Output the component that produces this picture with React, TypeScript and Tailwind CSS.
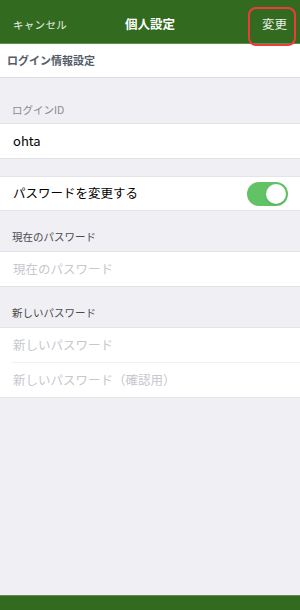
import React from "react";

export default function App() {
  const font = { fontFamily: '"Noto Sans CJK JP", "Noto Sans", sans-serif' };
  return (
    <div className="relative w-[300px] h-[610px] bg-[#efeff4] flex flex-col overflow-hidden" style={font}>
      <header className="relative h-[44px] bg-[#326a1f] border-b border-[#5f8c50] flex items-center justify-between pl-[13px] pr-[13px] pt-[6px]">
        <span className="text-[10.5px] text-white/90 tracking-[0.3px]">キャンセル</span>
        <span className="absolute left-1/2 top-[6px] bottom-0 flex items-center -translate-x-1/2 text-[12.5px] font-bold text-white">個人設定</span>
        <span className="text-[12.5px] text-white/90">変更</span>
        <div className="absolute left-[248px] top-[7px] w-[48px] h-[39px] border-2 border-[#ee3b3b] rounded-[8px] z-10"></div>
      </header>
      <div className="h-[34px] bg-white border-b border-[#dcdde3] flex items-center px-[7px]">
        <span className="text-[11px] font-semibold text-[#555c69]">ログイン情報設定</span>
      </div>
      <div className="h-[45px] flex items-end px-[12px] pb-[5px]">
        <span className="text-[10.5px] text-[#8a8a8f]">ログインID</span>
      </div>
      <div className="h-[36px] bg-white border-y border-[#e3e3e8] flex items-center px-[13px]">
        <span className="text-[13px] text-black">ohta</span>
      </div>
      <div className="h-[17px]"></div>
      <div className="h-[35px] bg-white border-y border-[#e3e3e8] flex items-center justify-between pl-[13px] pr-[12px]">
        <span className="text-[12.5px] text-black">パスワードを変更する</span>
        <div className="w-[41px] h-[24px] rounded-full bg-[#62c366] relative">
          <div className="absolute right-[2px] top-[2px] w-[20px] h-[20px] rounded-full bg-white shadow"></div>
        </div>
      </div>
      <div className="h-[40px] flex items-end px-[12px] pb-[6px]">
        <span className="text-[10.5px] text-[#4a4a4f]">現在のパスワード</span>
      </div>
      <div className="h-[36px] bg-white border-y border-[#e3e3e8] flex items-center px-[13px]">
        <span className="text-[12.5px] text-[#c7c7cd]">現在のパスワード</span>
      </div>
      <div className="h-[40px] flex items-end px-[12px] pb-[6px]">
        <span className="text-[10.5px] text-[#4a4a4f]">新しいパスワード</span>
      </div>
      <div className="bg-white border-y border-[#e3e3e8] flex flex-col">
        <div className="h-[34px] flex items-center px-[13px]">
          <span className="text-[12.5px] text-[#c7c7cd]">新しいパスワード</span>
        </div>
        <div className="ml-[12px] h-px bg-[#f0f0f3]"></div>
        <div className="h-[34px] flex items-center px-[13px]">
          <span className="text-[12.5px] text-[#c7c7cd]">新しいパスワード（確認用）</span>
        </div>
      </div>
      <div className="flex-1"></div>
      <footer className="h-[15px] bg-[#326a1f] border-t border-[#5f8c50]"></footer>
    </div>
  );
}
